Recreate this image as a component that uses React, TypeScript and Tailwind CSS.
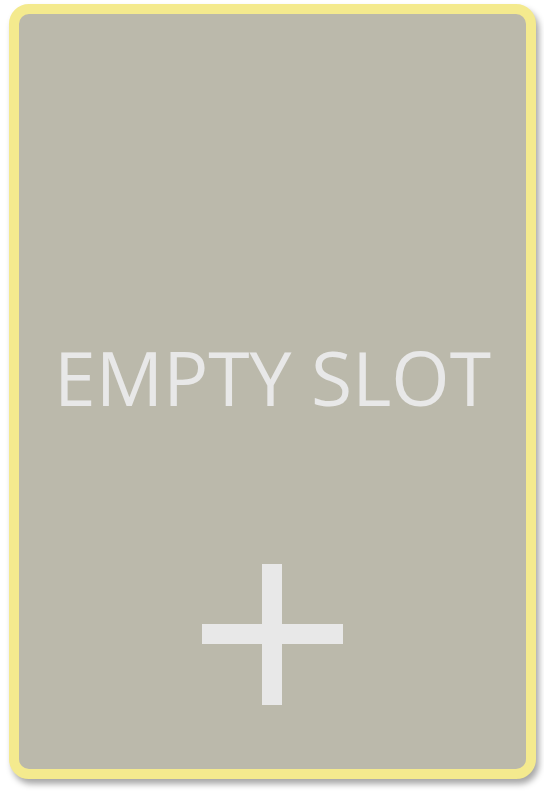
export default function App() {
  return (
    <div className="w-[544px] h-[800px] bg-white relative">
      <div className="absolute left-[9px] top-[4px] w-[527px] h-[775px] rounded-[20px] border-[10px] border-[#f4ea8e] bg-[#bbb9ab] shadow-[3px_5px_6px_rgba(0,0,0,0.35)] flex flex-col items-center">
        <div
          className="mt-[326px] text-[75px] leading-none text-[#e8e8e8] whitespace-nowrap"
          style={{ fontFamily: '"Open Sans", sans-serif' }}
        >
          EMPTY SLOT
        </div>
        <div className="mt-[149px] relative w-[141px] h-[141px]">
          <div className="absolute left-[60px] top-0 w-[20px] h-[141px] bg-[#e8e8e8]" />
          <div className="absolute left-0 top-[60px] w-[141px] h-[20px] bg-[#e8e8e8]" />
        </div>
      </div>
    </div>
  );
}
